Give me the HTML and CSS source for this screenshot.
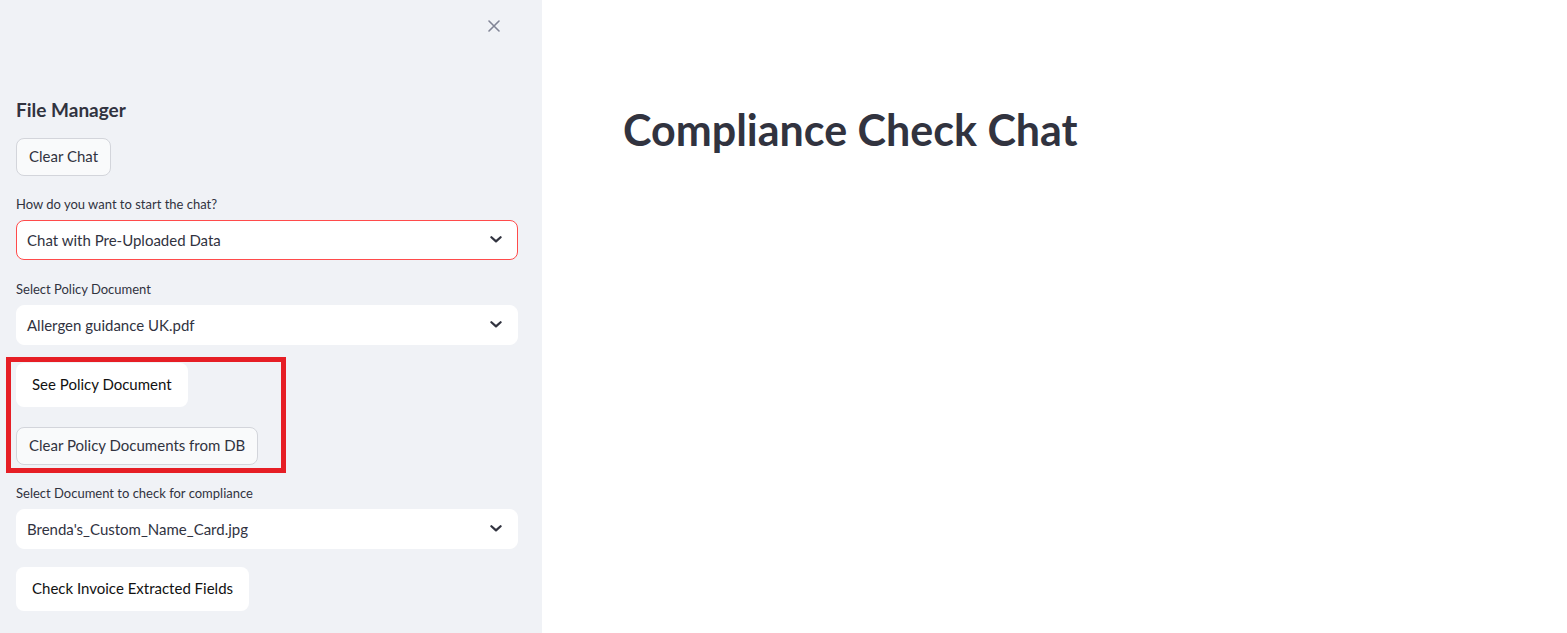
FILE: index.html
```html
<!DOCTYPE html>
<html lang="en">
<head>
<meta charset="utf-8">
<title>Compliance Check Chat</title>
<link rel="stylesheet" href="styles.css">
</head>
<body>
<div class="app">
  <aside class="sidebar">
    <div class="sb-top">
      <button class="close" aria-label="Close sidebar">
        <svg width="12" height="12" viewBox="0 0 12 12"><path d="M1 1L11 11M11 1L1 11" stroke="#808495" stroke-width="1.6" stroke-linecap="round"/></svg>
      </button>
    </div>
    <h3 class="sb-title">File Manager</h3>
    <button class="btn btn-sec btn-clear">Clear Chat</button>
    <label class="lbl lbl-1">How do you want to start the chat?</label>
    <div class="select select-focus">
      <span>Chat with Pre-Uploaded Data</span>
      <svg class="chev" width="12" height="7" viewBox="0 0 12 7"><path d="M1.4 1.2L6 5.4L10.6 1.2" fill="none" stroke="#31333f" stroke-width="2.2" stroke-linecap="round" stroke-linejoin="round"/></svg>
    </div>
    <label class="lbl lbl-2">Select Policy Document</label>
    <div class="select">
      <span>Allergen guidance UK.pdf</span>
      <svg class="chev" width="12" height="7" viewBox="0 0 12 7"><path d="M1.4 1.2L6 5.4L10.6 1.2" fill="none" stroke="#31333f" stroke-width="2.2" stroke-linecap="round" stroke-linejoin="round"/></svg>
    </div>
    <button class="btn btn-white btn-see">See Policy Document</button>
    <button class="btn btn-sec btn-cpd">Clear Policy Documents from DB</button>
    <label class="lbl lbl-3">Select Document to check for compliance</label>
    <div class="select">
      <span>Brenda's_Custom_Name_Card.jpg</span>
      <svg class="chev" width="12" height="7" viewBox="0 0 12 7"><path d="M1.4 1.2L6 5.4L10.6 1.2" fill="none" stroke="#31333f" stroke-width="2.2" stroke-linecap="round" stroke-linejoin="round"/></svg>
    </div>
    <button class="btn btn-white btn-check">Check Invoice Extracted Fields</button>
    <div class="annot"></div>
  </aside>
  <main class="main">
    <h1 class="title">Compliance Check Chat</h1>
  </main>
</div>
</body>
</html>
```

FILE: styles.css
```css
* { box-sizing: border-box; }
html, body { margin: 0; padding: 0; }
body {
  font-family: Lato, "Noto Sans", "Liberation Sans", sans-serif;
  color: #31333f;
  background: #ffffff;
  width: 1567px;
  height: 633px;
  overflow: hidden;
}
.app { display: flex; height: 633px; }

.sidebar {
  position: relative;
  width: 542px;
  flex: 0 0 542px;
  background: #f0f2f6;
  padding: 0 24px 0 16px;
  display: flex;
  flex-direction: column;
  align-items: flex-start;
}
.sb-top {
  height: 52px;
  align-self: stretch;
  display: flex;
  justify-content: flex-end;
  align-items: center;
}
.close {
  border: 0;
  background: none;
  padding: 0;
  margin-right: 18px;
  width: 12px;
  height: 12px;
  display: flex;
}
.sb-title {
  margin: 44px 0 0 0;
  font-size: 19px;
  line-height: 28px;
  font-weight: 700;
  color: #31333f;
}
.btn {
  font-family: inherit;
  font-size: 15px;
  border-radius: 8px;
  padding: 0 12px;
  cursor: pointer;
}
.btn-sec {
  height: 38px;
  background: #f9fafb;
  border: 1px solid #d3d5db;
  color: #31333f;
  padding-bottom: 2px;
}
.btn-white {
  height: 44px;
  background: #ffffff;
  border: 0;
  color: #111111;
  padding: 0 16px 3px;
}
.btn-clear { margin-top: 14px; }
.lbl {
  font-size: 13px;
  line-height: 20px;
  color: #31333f;
}
.lbl-1 { margin-top: 18px; }
.lbl-2 { margin-top: 19px; }
.lbl-3 { margin-top: 18px; }
.select {
  margin-top: 6px;
  align-self: stretch;
  height: 40px;
  background: #ffffff;
  border: 1px solid #ffffff;
  border-radius: 8px;
  display: flex;
  align-items: center;
  justify-content: space-between;
  padding: 0 15px 1px 10px;
  font-size: 15px;
  color: #31333f;
}
.select-focus { border-color: #ff4b4b; }
.chev { display: block; }
.btn-see { margin-top: 18px; }
.btn-cpd { margin-top: 20px; }
.btn-check { margin-top: 18px; }

.annot {
  position: absolute;
  left: 6px;
  top: 357px;
  width: 280px;
  height: 116px;
  border: 5px solid #e61e25;
  pointer-events: none;
}

.main {
  flex: 1;
  padding-left: 81px;
}
.title {
  margin: 104px 0 0 0;
  font-size: 43px;
  line-height: 52px;
  font-weight: 700;
  color: #31333f;
}
```
